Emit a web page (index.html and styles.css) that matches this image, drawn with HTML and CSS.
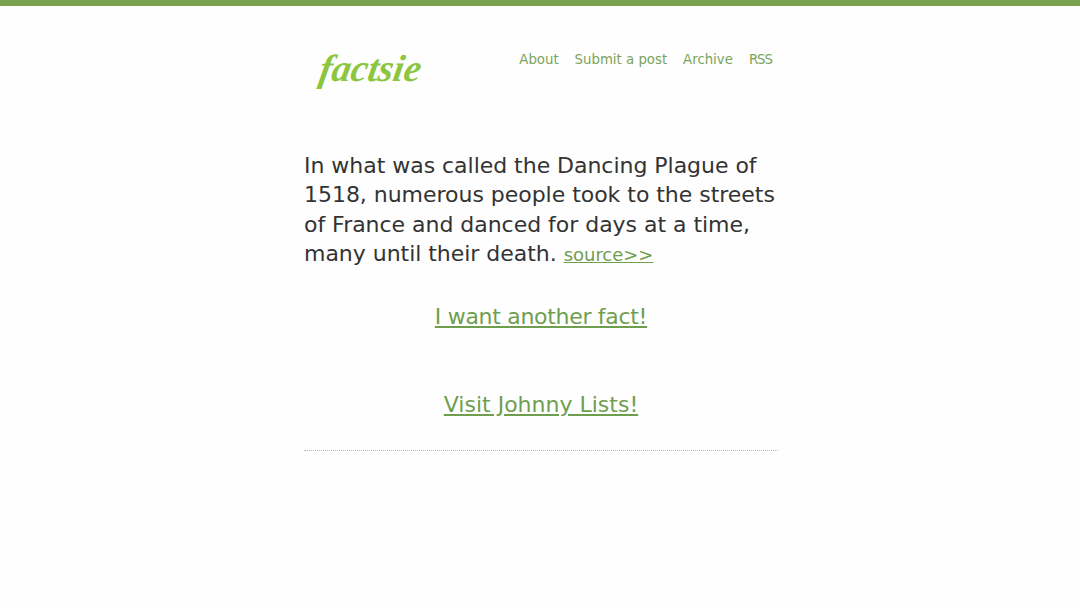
FILE: index.html
```html
<!DOCTYPE html>
<html lang="en">
<head>
<meta charset="utf-8">
<title>factsie</title>
<link rel="stylesheet" href="styles.css">
</head>
<body>
<div class="page">
  <header class="header">
    <a class="logo" href="#">factsie</a>
    <nav class="nav">
      <a href="#">About</a>
      <a href="#">Submit a post</a>
      <a href="#">Archive</a>
      <a class="rss" href="#">RSS</a>
    </nav>
  </header>
  <main>
    <p class="fact">In what was called the Dancing Plague of 1518, numerous people took to the streets of France and danced for days at a time, many until their death. <a class="source" href="#">source&gt;&gt;</a></p>
    <p class="cta first"><a href="#">I want another fact!</a></p>
    <p class="cta second"><a href="#">Visit Johnny Lists!</a></p>
  </main>
  <div class="rule"></div>
</div>
</body>
</html>
```
FILE: styles.css
```css
* { box-sizing: border-box; }
html, body { margin: 0; height: 100%; }
body {
  background: #fefefe;
  border-top: 6px solid #7ba34f;
  padding-left: 2px;
  font-family: "DejaVu Sans", sans-serif;
  color: #333;
}
.page { width: 474px; margin: 0 auto; }
.header {
  display: flex;
  justify-content: space-between;
  height: 145px;
  padding: 39px 6px 0 16px;
}
.logo {
  display: inline-block;
  height: 46px;
  font-family: "Liberation Serif", serif;
  font-style: italic;
  font-weight: bold;
  font-size: 38px;
  line-height: 46px;
  color: #8cc63f;
  text-decoration: none;
  transform: skewX(-10deg);
}
.nav { display: flex; gap: 16px; height: 30px; font-size: 13.3px; line-height: 30px; }
.nav a { color: #7ba35a; text-decoration: none; }
.nav .rss { letter-spacing: -1px; }
.fact { margin: 0; font-size: 22px; line-height: 29.4px; letter-spacing: -0.03px; color: #333; }
.source { font-size: 18px; color: #6f9e4f; }
.cta { margin: 0; text-align: center; font-size: 22px; line-height: 30px; }
.cta a { color: #6f9e4f; }
.first { margin-top: 32px; letter-spacing: -0.3px; }
.second { margin-top: 58px; }
.rule { margin-top: 30px; border-top: 1px dotted #bbb; }
```
